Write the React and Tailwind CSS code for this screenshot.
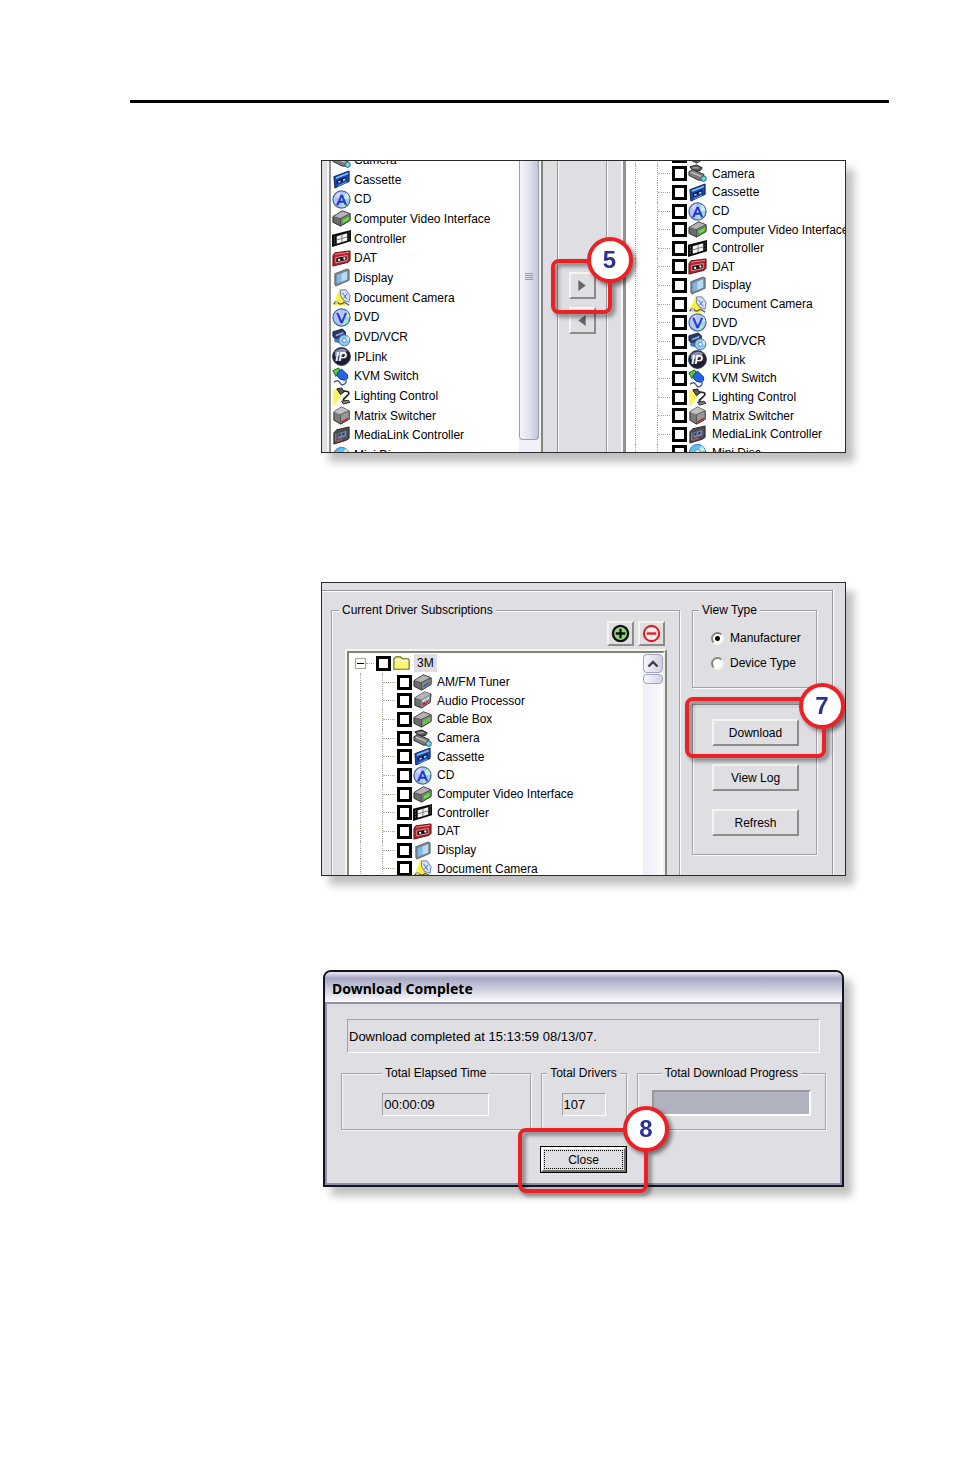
import { useState } from "react";
import clsx from "clsx";

const devices = [
  { name: "AM/FM Tuner", icon: "tuner" },
  { name: "Audio Processor", icon: "audio" },
  { name: "Cable Box", icon: "cable" },
  { name: "Camera", icon: "camera" },
  { name: "Cassette", icon: "cassette" },
  { name: "CD", icon: "cd" },
  { name: "Computer Video Interface", icon: "cvi" },
  { name: "Controller", icon: "controller" },
  { name: "DAT", icon: "dat" },
  { name: "Display", icon: "display" },
  { name: "Document Camera", icon: "document" },
  { name: "DVD", icon: "dvd" },
  { name: "DVD/VCR", icon: "dvdvcr" },
  { name: "IPLink", icon: "iplink" },
  { name: "KVM Switch", icon: "kvm" },
  { name: "Lighting Control", icon: "lighting" },
  { name: "Matrix Switcher", icon: "matrix" },
  { name: "MediaLink Controller", icon: "medialink" },
  { name: "Mini Disc", icon: "minidisc" },
];

const Box = ({ children }) => (
  <>
    <path d="M1 8 L11 2 L19 5 L19 12 L9 18 L1 14Z" fill="#6b6b6b" stroke="#2d2d2d" />
    <path d="M1 8 L11 2 L19 5 L9 10Z" fill="#b4b4b4" stroke="#444" strokeWidth=".6" />
    <path d="M9 10 L19 5 L19 12 L9 18Z" fill="#858585" stroke="#333" strokeWidth=".6" />
    {children}
  </>
);

const Disc = ({ letter }) => (
  <>
    <circle cx="10" cy="10" r="9" fill="#a9c8f4" stroke="#47649b" strokeWidth="1.3" />
    <path d="M10 10 L15 3 A8.500 8.500 0 0 1 18.500 9Z" fill="#c7f0d8" />
    <path d="M10 10 L17 14 A8.500 8.500 0 0 1 11 18.500Z" fill="#a6ecc0" />
    <path d="M10 10 L3 6 A8.500 8.500 0 0 1 8 2Z" fill="#d6d3fa" />
    <text x="10" y="15.500" textAnchor="middle" fontSize="16" fontFamily="Liberation Sans, sans-serif" fill="#1b28d8" stroke="#1b28d8" strokeWidth=".6">
      {letter}
    </text>
  </>
);

const drawings = {
  tuner: (
    <Box>
      <path d="M11 13 L17 9.500 V11.500 L11 15Z" fill="#3d5f9c" />
    </Box>
  ),
  audio: (
    <>
      <path d="M2 7 L12 1 L19 3 L18 12 L9 18 L2 15Z" fill="#6f6f6f" stroke="#2d2d2d" />
      <path d="M2 7 L12 1 L19 3 L9 9Z" fill="#b4b4b4" />
      <path d="M9 9 L18 4 L17 12 L9 17Z" fill="#8aa3b3" />
      <path d="M10 10 L13 8 V10 L10 12Z M14 7.500 L17 6 V8 L14 9.500Z" fill="#d6eef8" />
      <path d="M10 13 L12 11 L13 13 L16 9.500 V12 L10 16Z" fill="#d81f2a" />
    </>
  ),
  cable: (
    <Box>
      <path d="M10.500 11.500 L12.500 10.500 V15 L10.500 16Z M13.300 10 L15.200 9 V13.500 L13.300 14.500Z M16 8.500 L18 7.500 V12 L16 13Z" fill="#63d33c" />
    </Box>
  ),
  camera: (
    <>
      <path d="M2 3 L9 1 L15 4 L13 7 L6 8Z" fill="#5a5a5a" stroke="#222" />
      <path d="M1 8 L5 6 L17 11 L15 17 L11 17 L1 12Z" fill="#7b7b7b" stroke="#2c2c2c" />
      <path d="M3 8.500 L14 13" stroke="#c4c4c4" strokeWidth="1.500" />
      <path d="M5 4 L11 4" stroke="#aaa" strokeWidth="1.500" />
      <circle cx="16.500" cy="15.500" r="2.800" fill="#59dfe6" stroke="#35606a" />
    </>
  ),
  cassette: (
    <>
      <path d="M2 7 L18 1 L18 12 L3 19Z" fill="#1749b8" stroke="#101f57" />
      <path d="M4 7.500 L17 2.500 V4.500 L4 9.500Z" fill="#7ec1f5" />
      <path d="M5 11 L15 7 V10.500 L5 14.500Z" fill="#0c1740" />
      <path d="M6.500 12 L9 11 V12.500 L6.500 13.500Z M11.500 10 L14 9 V10.500 L11.500 11.500Z" fill="#dfeeff" />
      <path d="M6 16.500 L15 12 V13.500 L6 17.500Z" fill="#4aa6f1" />
    </>
  ),
  cd: <Disc letter="A" />,
  cvi: (
    <Box>
      <path d="M11 11.500 L18 7.500 V11.500 L11 15.500Z" fill="#67e63c" stroke="#328a1c" strokeWidth=".6" />
    </Box>
  ),
  controller: (
    <>
      <path d="M0 6 L20 1 V13 L0 19Z" fill="#0b0b0b" />
      <path d="M5 7.500 L16 4.500 V12 L5 15.500Z" fill="#f5f5f5" />
      <path d="M10.500 6 V14 M5 11.500 L16 8.300" stroke="#777" strokeWidth="1" />
      <path d="M2.500 8 V16 M18 3.500 V11" stroke="#777" strokeWidth=".8" strokeDasharray="1.500 1.500" />
    </>
  ),
  dat: (
    <>
      <path d="M1 7 L3 4 L19 2 L19 12 L17 14 L1 18Z" fill="#bd1f28" stroke="#591016" />
      <path d="M3 5.500 L18 3.500" stroke="#ee8b8e" strokeWidth="1" />
      <path d="M4 9 L16 7 V12 L4 14.500Z" fill="#221012" stroke="#f3c9c9" strokeWidth=".8" />
      <circle cx="7.500" cy="11.500" r="1.200" fill="#fff" />
      <circle cx="13" cy="10" r="1.200" fill="#fff" />
    </>
  ),
  display: (
    <>
      <path d="M3 6 L16 1 L18 2 L18 13 L4 19 L3 17Z" fill="#7c8790" stroke="#5c666e" />
      <path d="M5 7.500 L16 3.500 V12 L5 16.500Z" fill="#7fb8ea" />
      <path d="M10 5.800 L16 3.500 V12 L10 14.500Z" fill="#b5dcf6" />
    </>
  ),
  document: (
    <>
      <path d="M8 1 L12 8 L14 19 L1 18Z" fill="#fbf236" />
      <path d="M9 2 L15 2 L19 8 L18 15 L12 13 L9 8Z" fill="#d7e2f8" stroke="#6478ab" />
      <path d="M11 5 L16 12 M16 6 L12 11" stroke="#5268bb" strokeWidth="1" />
      <path d="M2 17 Q4 13 7 16 Q9 18 13 15 L18 18" fill="none" stroke="#665e4b" strokeWidth="1.500" />
      <circle cx="5" cy="15.500" r="1.500" fill="#b7c8ef" />
    </>
  ),
  dvd: <Disc letter="V" />,
  dvdvcr: (
    <>
      <path d="M1 4 L11 1 L14 4 V8 L4 12 L1 9Z" fill="#263a63" stroke="#172440" />
      <path d="M4 7 L12 4 V6 L4 9Z" fill="#87add8" />
      <path d="M2 12 L7 11 L8 16 L3 15Z" fill="#3e7ad1" />
      <circle cx="13" cy="13" r="5.800" fill="#8fcdf3" stroke="#4068ad" />
      <path d="M13 13 L17 9 A5 5 0 0 1 18 13Z" fill="#d3f3d9" />
      <circle cx="13" cy="13" r="2" fill="#fff" stroke="#4e7fbe" />
    </>
  ),
  iplink: (
    <>
      <circle cx="10" cy="10" r="9.400" fill="#191d36" stroke="#33374e" />
      <path d="M3 5 A9 9 0 0 1 16 4 L12 8 L3 10Z" fill="#8990a8" />
      <text x="9.500" y="15" textAnchor="middle" fontSize="13" fontWeight="700" fontStyle="italic" fontFamily="Liberation Sans, sans-serif" fill="#fff">
        IP
      </text>
    </>
  ),
  kvm: (
    <>
      <path d="M1 4 L7 1 L9 5 L4 10Z" fill="#55ce35" stroke="#246319" />
      <path d="M6 6 L10 2 L16 8 Q18 13 13 14 Q8 14 5 9Z" fill="#2365e8" stroke="#133685" />
      <path d="M2 16 Q6 13 8 16 Q10 20 13 18 Q15 17 15 14" fill="none" stroke="#3c549b" strokeWidth="1.500" />
    </>
  ),
  lighting: (
    <>
      <path d="M1 2 L6 3 L10 9 L3 19 L1 19Z" fill="#fdf561" />
      <path d="M5 2 L10 1 L13 5 L9 8Z" fill="#575757" stroke="#181818" />
      <path d="M12 4 L17 5 Q19 7 16 9 L12 13 L13 16" fill="none" stroke="#252525" strokeWidth="1.800" />
      <path d="M10 15 L17 14 L19 16 L12 18Z" fill="#888" stroke="#222" />
    </>
  ),
  matrix: (
    <>
      <path d="M2 6 L10 1 L18 5 V14 L9 19 L2 15Z" fill="#7c7c7c" stroke="#2b2b2b" />
      <path d="M2 6 L10 1 L18 5 L9 9Z" fill="#c1c1c1" />
      <path d="M9 9 L18 5 V14 L9 19Z" fill="#999" stroke="#3b3b3b" strokeWidth=".7" />
      <path d="M10 16 L17 12 V14 L10 18Z" fill="#c5202a" />
    </>
  ),
  medialink: (
    <>
      <path d="M2 7 L5 4 L18 1 L18 13 L15 15 L2 19Z" fill="#4c4c50" stroke="#252528" />
      <path d="M6 8 L15 5 V11 L6 14Z" fill="#6d83ab" />
      <path d="M7 9 L9 8 V10 L7 11Z M11 8 L13 7 V9 L11 10Z" fill="#202945" />
      <path d="M5 16 L11 14" stroke="#d04a4a" strokeWidth="1.500" />
      <path d="M4 8 V16" stroke="#9a9aa0" strokeWidth="1" />
    </>
  ),
  minidisc: (
    <>
      <circle cx="10" cy="10" r="8.500" fill="#66bdf0" stroke="#2a78b8" />
      <path d="M10 10 L14 3 A8 8 0 0 1 18 8Z" fill="#c9f1dd" />
      <circle cx="10" cy="10" r="3" fill="#fff" stroke="#3a8bc4" />
    </>
  ),
  folder: (
    <>
      <path d="M2 16 V5 L4 3 H9 L11 5 H17 L18 6 V16Z" fill="#fbf570" stroke="#6d6926" strokeWidth="1.200" />
      <path d="M3 7 H17" stroke="#fffde0" strokeWidth="1.500" />
    </>
  ),
};

function DeviceIcon({ name }) {
  return (
    <svg viewBox="0 0 20 20" className="size-[19px] shrink-0" aria-hidden="true">
      {drawings[name]}
    </svg>
  );
}

function Callout({ number, className, badgeClass }) {
  return (
    <div
      className={clsx(
        "pointer-events-none absolute z-10 rounded-lg border-4 border-[#ed2024] drop-shadow-[3px_3px_2px_rgba(0,0,0,0.5)]",
        className
      )}
    >
      <span
        className={clsx(
          "absolute flex size-[46px] items-center justify-center rounded-full border-4 border-[#ed2024] bg-white text-2xl font-bold text-[#2e3192]",
          badgeClass
        )}
      >
        {number}
      </span>
    </div>
  );
}

function Button({ className, children, ...props }) {
  return (
    <button
      type="button"
      className={clsx(
        "flex items-center justify-center border-2 border-t-[#f5f5ef] border-r-[#8b8b88] border-b-[#8b8b88] border-l-[#f5f5ef] bg-[#dfdee3]",
        className
      )}
      {...props}
    >
      {children}
    </button>
  );
}

function Group({ title, className, legendClass, children }) {
  return (
    <fieldset
      className={clsx(
        "border border-[#a1a1a4] shadow-[1px_1px_0_#fbfbfb,inset_1px_1px_0_#fbfbfb]",
        className
      )}
    >
      {title && <legend className={clsx("bg-[#dfdee3] px-[3px] leading-4", legendClass)}>{title}</legend>}
      {children}
    </fieldset>
  );
}

function CheckBox({ id }) {
  return (
    <input
      type="checkbox"
      id={id}
      className="mr-px size-[15px] shrink-0 appearance-none border-[3px] border-black bg-white checked:bg-gray-500"
    />
  );
}

function TreeRow({ device, prefix }) {
  const id = `${prefix}-${device.icon}`;
  return (
    <li className="flex min-h-0 flex-1 items-center pl-[9px]">
      <span className="w-[22px] shrink-0 self-stretch border-l border-dotted border-[#a8a698]" />
      <span className="flex w-[15px] shrink-0 items-center self-stretch border-l border-dotted border-[#a8a698]">
        <span className="w-3 border-t border-dotted border-[#a8a698]" />
      </span>
      <CheckBox id={id} />
      <DeviceIcon name={device.icon} />
      <label htmlFor={id} className="ml-[5px] leading-4">{device.name}</label>
    </li>
  );
}

function TransferFigure() {
  return (
    <div className="flex h-[293px] overflow-hidden border border-[#2b2b2b] bg-[#dfdee3] whitespace-nowrap shadow-[8px_9px_8px_rgba(0,0,0,0.25)]">
      <div className="ml-[5px] w-[216px] shrink-0 border-x-2 border-l-[#f7f7f3] border-r-[#85857f]">
        <div className="flex border-x-2 border-l-[#93938e] border-r-[#f3f2ea] bg-white">
          <ul className="-mt-[11px] flex h-[315px] flex-1 flex-col pl-px">
            {devices.slice(3).map((device) => (
              <li key={device.name} className="flex min-h-0 flex-1 items-center gap-[3px]">
                <DeviceIcon name={device.icon} />
                <span className="leading-4">{device.name}</span>
              </li>
            ))}
          </ul>
          <div className="h-[291px] w-5 shrink-0 bg-[#f0f1f9]">
            <div className="flex h-[279px] flex-col items-center justify-center gap-px rounded-b-sm border border-t-0 border-[#9c9db8] bg-linear-to-r from-[#f3f4fb] via-[#e2e3f0] to-[#c3c5da] pb-12">
              <span className="h-px w-2 bg-[#9495b3]" />
              <span className="h-px w-2 bg-[#9495b3]" />
              <span className="h-px w-2 bg-[#9495b3]" />
              <span className="h-px w-2 bg-[#9495b3]" />
            </div>
          </div>
        </div>
      </div>
      <div className="w-[78px] shrink-0 px-[14px]">
        <div className="flex h-full flex-col items-center gap-2 border-x border-[#98989b] pt-[111px] shadow-[1px_0_0_#fbfbfb,inset_1px_0_0_#fbfbfb]">
          <div className="relative">
            <Button className="size-[27px]" aria-label="Add driver">
              <svg viewBox="0 0 10 14" className="h-[13px] w-[10px]"><path d="M1 1 L9 7 L1 13Z" fill="#666" /></svg>
            </Button>
            <Callout number="5" className="-top-[13px] -right-4 -bottom-[15px] -left-[18px]" badgeClass="-top-[26px] -right-[25px]" />
          </div>
          <Button className="size-[27px]" aria-label="Remove driver">
            <svg viewBox="0 0 10 14" className="h-[13px] w-[10px]"><path d="M9 1 L1 7 L9 13Z" fill="#666" /></svg>
          </Button>
        </div>
      </div>
      <div className="min-w-0 flex-1 border-l-2 border-[#f7f7f3]">
        <div className="border-l-[3px] border-[#93938e] bg-white">
          <ul className="-mt-[15px] flex h-[316px] flex-col">
            {devices.slice(2).map((device) => (
              <TreeRow key={device.name} device={device} prefix="add" />
            ))}
          </ul>
        </div>
      </div>
    </div>
  );
}

function SubscriptionsFigure() {
  const [viewType, setViewType] = useState("Manufacturer");

  return (
    <div className="h-[294px] overflow-hidden border border-[#2b2b2b] bg-[#dfdee3] pt-[7px] pr-3 whitespace-nowrap shadow-[8px_9px_8px_rgba(0,0,0,0.25)]">
      <div className="flex h-[300px] items-start gap-3 border-t border-r border-[#98989b] pt-[11px] pr-[15px] pl-[9px] shadow-[1px_0_0_#fbfbfb,inset_0_1px_0_#fbfbfb]">
        <Group title="Current Driver Subscriptions" className="min-w-0 flex-1 pr-3 pl-[13px]" legendClass="-ml-[6px]">
          <div className="mt-[3px] flex justify-end gap-1 pr-[2px]">
            <Button className="h-[25px] w-[27px]" aria-label="Subscribe">
              <svg viewBox="0 0 20 20" className="size-[19px]">
                <circle cx="10" cy="10" r="8" fill="#8fd67c" stroke="#111" strokeWidth="2.400" />
                <path d="M10 5 V15 M5 10 H15" stroke="#111" strokeWidth="2.400" />
              </svg>
            </Button>
            <Button className="h-[25px] w-[27px]" aria-label="Unsubscribe">
              <svg viewBox="0 0 20 20" className="size-[19px]">
                <circle cx="10" cy="10" r="8" fill="#fbe9e9" stroke="#e01b22" strokeWidth="2.200" />
                <path d="M5 10 H15" stroke="#e01b22" strokeWidth="2.400" />
              </svg>
            </Button>
          </div>
          <div className="mt-[3px] border-2 border-b-0 border-t-[#f5f5ea] border-r-[#85857f] border-l-[#f5f5ea]">
            <div className="flex border-2 border-b-0 border-t-[#85857f] border-r-[#f3f2ea] border-l-[#85857f] bg-white">
              <ul className="flex h-[225px] min-w-0 flex-1 flex-col pt-px pl-[2px]">
                <li className="flex min-h-0 flex-1 items-center pl-1">
                  <button type="button" aria-label="Collapse 3M" className="flex size-[11px] items-center justify-center border border-[#a8a698] bg-white">
                    <span className="h-px w-[7px] bg-black" />
                  </button>
                  <span className="mr-[2px] w-2 border-t border-dotted border-[#a8a698]" />
                  <CheckBox id="sub-3m" />
                  <DeviceIcon name="folder" />
                  <label htmlFor="sub-3m" className="ml-[3px] bg-[#dfdee3] px-[3px] leading-[18px]">3M</label>
                </li>
                {devices.slice(0, 11).map((device) => (
                  <TreeRow key={device.name} device={device} prefix="sub" />
                ))}
              </ul>
              <div className="flex w-5 shrink-0 flex-col gap-px bg-linear-to-r from-[#edeef8] to-[#fcfcfe] pt-px">
                <button type="button" aria-label="Scroll up" className="flex h-[19px] items-center justify-center rounded-sm border border-[#a3a4bd] bg-linear-to-r from-[#f7f7fc] to-[#cfd0e0]">
                  <svg viewBox="0 0 12 8" className="h-2 w-3"><path d="M1.500 6.500 L6 2 L10.500 6.500" fill="none" stroke="#3d3e48" strokeWidth="2.400" /></svg>
                </button>
                <div className="h-[10px] rounded-sm border border-[#a3a4bd] bg-linear-to-r from-[#f7f7fc] to-[#d3d4e4]" />
              </div>
            </div>
          </div>
        </Group>
        <div className="flex w-[125px] shrink-0 flex-col gap-4">
          <Group title="View Type" className="h-[86px] pl-[18px]" legendClass="-ml-3">
            <div className="flex flex-col gap-[9px] pt-3">
              {["Manufacturer", "Device Type"].map((type) => (
                <label key={type} className="flex items-center gap-[6px] leading-4">
                  <input
                    type="radio"
                    name="viewType"
                    value={type}
                    checked={viewType === type}
                    onChange={(e) => setViewType(e.target.value)}
                    className="size-[13px] shrink-0 appearance-none rounded-full border-2 border-t-[#85857f] border-r-[#f5f5ef] border-b-[#f5f5ef] border-l-[#85857f] bg-white checked:bg-[radial-gradient(circle,#000_2px,#fff_3px)]"
                  />
                  {type}
                </label>
              ))}
            </div>
          </Group>
          <Group className="flex h-[151px] flex-col gap-[18px] pt-[14px] pr-[17px] pl-[19px]">
            <div className="relative">
              <Button className="h-[27px] w-full">Download</Button>
              <Callout number="7" className="-top-[22px] -right-[27px] -bottom-3 -left-[27px]" badgeClass="-top-[18px] -right-[23px]" />
            </div>
            <Button className="h-[27px] w-full shrink-0">View Log</Button>
            <Button className="h-[27px] w-full shrink-0">Refresh</Button>
          </Group>
        </div>
      </div>
    </div>
  );
}

function ReadOnly({ label, value, className }) {
  return (
    <input
      readOnly
      aria-label={label}
      value={value}
      className={clsx(
        "block border border-t-[#a1a1a4] border-r-white border-b-white border-l-[#a1a1a4] bg-transparent px-px text-[13px] outline-none",
        className
      )}
    />
  );
}

function DownloadDialog() {
  return (
    <div className="mx-[2px] rounded-t-lg border-2 border-[#14151c] bg-[#dfdee3] shadow-[8px_9px_8px_rgba(0,0,0,0.25)]">
      <h2 className="flex h-[30px] items-center rounded-t-md bg-linear-to-b from-[#dcdcea] from-5% via-[#a7a7c2] via-20% to-[#fdfdfe] px-[7px] pt-1 font-['Noto_Sans',sans-serif] text-sm font-bold whitespace-nowrap">
        Download Complete
      </h2>
      <div className="border-2 border-[#8f90a9] px-4 pt-[15px] pb-[10px]">
        <ReadOnly label="Status" value="Download completed at 15:13:59 08/13/07." className="mx-1 h-[34px] w-[calc(100%-8px)]" />
        <div className="-mx-[2px] mt-3 flex gap-[10px]">
          <Group title="Total Elapsed Time" className="h-[65px] min-w-0 flex-1" legendClass="mx-auto">
            <ReadOnly label="Total Elapsed Time" value="00:00:09" className="mx-auto mt-3 h-[23px] w-[107px]" />
          </Group>
          <Group title="Total Drivers" className="h-[65px] w-[86px] shrink-0" legendClass="mx-auto">
            <ReadOnly label="Total Drivers" value="107" className="mx-auto mt-3 h-[23px] w-11" />
          </Group>
          <Group title="Total Download Progress" className="h-[65px] min-w-0 flex-1" legendClass="mx-auto">
            <div
              role="progressbar"
              aria-label="Total Download Progress"
              aria-valuenow={100}
              className="mx-[14px] mt-[9px] h-[26px] border-2 border-t-[#98989c] border-r-white border-b-white border-l-[#98989c] bg-[#b0b2bf]"
            />
          </Group>
        </div>
        <div className="relative mx-auto mt-4 w-[87px]">
          <button type="button" className="flex h-[27px] w-full border border-black bg-[#dfdee3]">
            <span className="flex flex-1 self-stretch border-2 border-t-white border-r-[#6f6f6c] border-b-[#6f6f6c] border-l-white p-px">
              <span className="flex flex-1 items-center justify-center border border-dotted border-black">Close</span>
            </span>
          </button>
          <Callout number="8" className="-top-[18px] -right-[21px] -bottom-5 -left-[22px]" badgeClass="-top-[26px] -right-[25px]" />
        </div>
      </div>
    </div>
  );
}

export default function App() {
  return (
    <main className="min-h-screen bg-white pt-[100px] pr-[65px] pb-20 pl-[130px] font-['Liberation_Sans',Arial,sans-serif] text-xs text-black">
      <hr className="border-t-[3px] border-black" />
      <div className="pt-[57px] pr-[43px] pl-[191px]">
        <TransferFigure />
        <div className="mt-[129px]">
          <SubscriptionsFigure />
        </div>
        <div className="mt-[94px]">
          <DownloadDialog />
        </div>
      </div>
    </main>
  );
}
